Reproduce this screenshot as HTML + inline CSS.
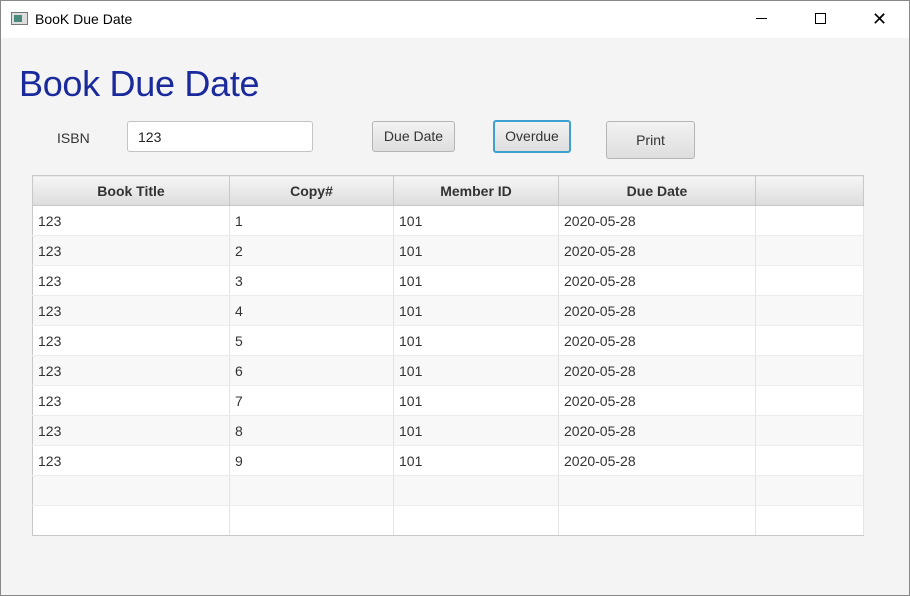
<!DOCTYPE html><html><head><style>
*{margin:0;padding:0;box-sizing:border-box}
body{width:910px;height:596px;background:#f4f4f4;font-family:"Liberation Sans",sans-serif;position:relative;overflow:hidden;}
.fr{position:absolute;left:0;top:0;width:910px;height:596px;border:1px solid #888;pointer-events:none}
.tb{position:absolute;left:0;top:0;width:910px;height:38px;background:#fff}
.tt{position:absolute;left:35px;top:11px;font-size:14px;color:#000}
.ic{position:absolute;left:11px;top:12px;width:17px;height:13px;border:1px solid #777;background:#ddd}
.ic i{position:absolute;left:2px;top:2px;width:8px;height:7px;background:#4a8a7a}
.h1{position:absolute;left:19px;top:63px;font-size:36px;color:#1a2a9c;letter-spacing:-0.3px}
.lbl{position:absolute;left:57px;top:130px;font-size:14px;color:#333}
.inp{position:absolute;left:127px;top:121px;width:186px;height:31px;border:1px solid #c4c4c4;border-radius:3px;background:#fff;font-size:14px;padding:7px 10px;color:#222}
.btn{position:absolute;border:1px solid #b5b5b5;border-radius:3px;background:linear-gradient(#f2f2f2,#dedede);font-size:14px;color:#333;text-align:center}
table{position:absolute;left:32px;top:175px;width:832px;border-collapse:collapse;border:1px solid #c8c8c8;font-size:14px;table-layout:fixed}
th{height:30px;background:linear-gradient(#f6f6f6,#dcdcdc);border-right:1px solid #c8c8c8;border-bottom:1px solid #c8c8c8;color:#333;font-weight:bold;}
td{height:30px;border-right:1px solid #e4e4e4;padding-left:5px;color:#333;border-bottom:1px solid #ececec}
tr:nth-child(even) td{background:#f8f8f8}
tr:nth-child(odd) td{background:#fff}
tr:last-child td{border-bottom:1px solid #c8c8c8}
</style></head><body>
<div class="tb"><div class="ic"><i></i></div><div class="tt">BooK Due Date</div>
<div style="position:absolute;left:756px;top:18px;width:11px;height:1px;background:#000"></div>
<div style="position:absolute;left:815px;top:13px;width:11px;height:11px;border:1px solid #000"></div>
<div style="position:absolute;left:872px;top:12px;font-size:18px;line-height:14px">✕</div></div>
<div class="h1">Book Due Date</div>
<div class="lbl">ISBN</div>
<div class="inp">123</div>
<div class="btn" style="left:372px;top:121px;width:83px;height:31px;line-height:29px">Due Date</div>
<div class="btn" style="left:493px;top:120px;width:78px;height:33px;line-height:29px;border:2px solid #3ca0d0">Overdue</div>
<div class="btn" style="left:606px;top:121px;width:89px;height:38px;line-height:36px">Print</div>
<table><colgroup><col style="width:197px"><col style="width:164px"><col style="width:165px"><col style="width:197px"><col></colgroup>
<tr><th>Book Title</th><th>Copy#</th><th>Member ID</th><th>Due Date</th><th></th></tr>
<tbody>
<tr><td>123</td><td>1</td><td>101</td><td>2020-05-28</td><td></td></tr>
<tr><td>123</td><td>2</td><td>101</td><td>2020-05-28</td><td></td></tr>
<tr><td>123</td><td>3</td><td>101</td><td>2020-05-28</td><td></td></tr>
<tr><td>123</td><td>4</td><td>101</td><td>2020-05-28</td><td></td></tr>
<tr><td>123</td><td>5</td><td>101</td><td>2020-05-28</td><td></td></tr>
<tr><td>123</td><td>6</td><td>101</td><td>2020-05-28</td><td></td></tr>
<tr><td>123</td><td>7</td><td>101</td><td>2020-05-28</td><td></td></tr>
<tr><td>123</td><td>8</td><td>101</td><td>2020-05-28</td><td></td></tr>
<tr><td>123</td><td>9</td><td>101</td><td>2020-05-28</td><td></td></tr>
<tr><td></td><td></td><td></td><td></td><td></td></tr>
<tr><td></td><td></td><td></td><td></td><td></td></tr>
</tbody></table>
<div class="fr"></div>
</body></html>
